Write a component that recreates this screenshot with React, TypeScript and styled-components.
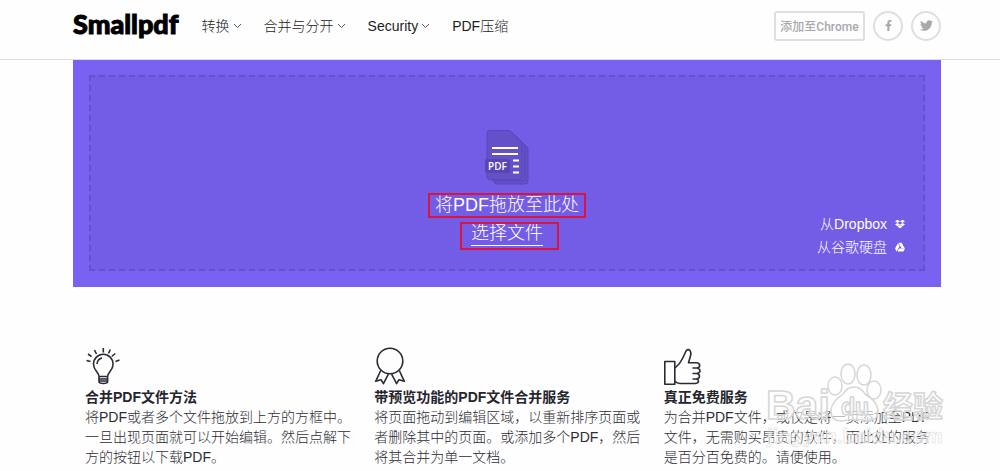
import React from "react";
import styled, { createGlobalStyle } from "styled-components";
import { FaFacebookF, FaTwitter, FaDropbox, FaGoogleDrive } from "react-icons/fa";

const GlobalStyle = createGlobalStyle`
  * { box-sizing: border-box; }
  body {
    margin: 0;
    background: #fefefe;
    color: #25252d;
    font-family: "Liberation Sans", "Noto Sans CJK SC", sans-serif;
    font-size: 14px;
    line-height: 20px;
  }
`;

const Header = styled.header`
  display: flex;
  align-items: center;
  height: 60px;
  padding: 0 59px 8px 73px;
  border-bottom: 1px solid #dddce4;
`;

const Logo = styled.a`
  margin-top: -4px;
  color: #000;
  font-family: "Lato Black", Lato, "Liberation Sans", sans-serif;
  font-size: 27px;
  font-weight: 900;
  line-height: 32px;
  text-decoration: none;
  -webkit-text-stroke: 1px #000;
`;

const Nav = styled.nav`
  display: flex;
  flex: 1;
  gap: 22px;
  margin-left: 23px;
`;

const NavLink = styled.a`
  display: flex;
  align-items: center;
  gap: 3px;
  color: #1c1c22;
  font-weight: 300;
  text-decoration: none;
  white-space: nowrap;
`;

const Actions = styled.div`
  display: flex;
  gap: 8px;
`;

const OutlineButton = styled.button<{ $round?: boolean }>`
  display: flex;
  align-items: center;
  justify-content: center;
  width: ${(p) => (p.$round ? "30px" : "91px")};
  height: 30px;
  padding: 0;
  border: 2px solid #e0dde3;
  border-radius: ${(p) => (p.$round ? "50%" : "3px")};
  background: transparent;
  color: #aaa8ac;
  font-family: Roboto, "Noto Sans CJK SC", sans-serif;
  font-size: 12px;
  font-weight: 500;
  white-space: nowrap;
`;

const Main = styled.main`
  padding: 0 59px 0 73px;
`;

const Hero = styled.section`
  padding: 15px 16px 16px 16px;
  background: #7961f1;
`;

const DropZone = styled.div`
  position: relative;
  display: flex;
  flex-direction: column;
  align-items: center;
  height: 196px;
  padding-top: 52px;
  border: 2px dashed #6651cc;
  background: #735ce6;
  color: #fff;
  font-size: 18px;
  font-weight: 300;
`;

const Marked = styled.div<{ $inset: string }>`
  position: relative;
  line-height: 24px;
  &::after {
    content: "";
    position: absolute;
    inset: ${(p) => p.$inset};
    border: 2px solid #d91440;
    pointer-events: none;
  }
`;

const DropText = styled(Marked)`
  margin-top: 8px;
`;

const ChooseWrap = styled(Marked)`
  margin-top: 4px;
`;

const ChooseButton = styled.button`
  display: block;
  padding: 0;
  border: 0;
  border-bottom: 1px solid #fff;
  background: none;
  color: inherit;
  font: inherit;
  line-height: 24px;
`;

const Sources = styled.div`
  position: absolute;
  right: 18px;
  bottom: 12px;
  display: flex;
  flex-direction: column;
  align-items: flex-end;
  gap: 3px;
`;

const SourceLink = styled.a`
  display: flex;
  align-items: center;
  gap: 8px;
  color: #fff;
  font-size: 14px;
  text-decoration: none;
`;

const Features = styled.section`
  position: relative;
  display: grid;
  grid-template-columns: repeat(3, 1fr);
  padding-top: 59px;
`;

const Feature = styled.article`
  padding-left: 12px;
`;

const FeatureIcon = styled.svg`
  display: block;
  width: 40px;
  height: 40px;
  fill: none;
  stroke: #2a2a34;
  stroke-width: 1.6;
  stroke-linejoin: round;
`;

const FeatureTitle = styled.h2`
  margin: 1px 0 0;
  font-size: 14px;
  font-weight: 700;
`;

const FeatureText = styled.p`
  margin: 0;
  color: #2c2c33;
  font-weight: 300;
`;

const Watermark = styled.svg`
  position: absolute;
  right: -9px;
  top: 68px;
  width: 185px;
  height: 100px;
  pointer-events: none;
`;

const Chevron = () => (
  <svg width="9" height="6" viewBox="0 0 9 6" fill="none" stroke="#55555c">
    <path d="M1 1l3.500 3.500L8 1" />
  </svg>
);

const PdfIcon = () => (
  <svg width="44" height="56" viewBox="0 0 44 56">
    <g fill="#6450c8" stroke="#5a47b6">
      <path d="M9 7h22l12 12v33q0 3-3 3H12q-3 0-3-3z" />
      <path d="M6 4h21l13 12v33q0 3-3 3H9q-3 0-3-3z" />
      <path d="M5 1.500h20L37 13.500v34q0 3-3 3H5q-3 0-3-3v-43q0-3 3-3z" />
    </g>
    <rect x="0" y="30" width="25" height="14" rx="2" fill="#5946b4" />
    <path d="M7 19h26M7 25h26M28 31.500h6M28 37.500h6M28 43.500h6" stroke="#fff" strokeWidth="2" />
    <text x="3" y="41" fill="#fff" fontFamily="Open Sans, sans-serif" fontSize="10" fontWeight="600">PDF</text>
  </svg>
);

const navItems = [
  { label: "转换", menu: true },
  { label: "合并与分开", menu: true },
  { label: "Security", menu: true },
  { label: "PDF压缩", menu: false },
];

const features = [
  {
    title: "合并PDF文件方法",
    text: "将PDF或者多个文件拖放到上方的方框中。一旦出现页面就可以开始编辑。然后点解下方的按钮以下载PDF。",
    icon: (
      <>
        <path d="M14 30.500c0-4-5.500-6-5.500-12.500a9.800 9.800 0 0 1 19.600 0c0 6.500-5.500 8.500-5.500 12.500z" />
        <path d="M12 18q.5-5 5-6M18.300 2v4.500M9.500 4l2 4M3 8l3.500 2.700M1.500 14.500l4 1M25.300 3.500l-1.800 4M30.300 7.500l-3.600 3M34.500 14l-4 1.500" />
        <path d="M14 31v4.500q0 2 4.300 2t4.300-2V31M14 33h8.600M14 35h8.600" />
      </>
    ),
  },
  {
    title: "带预览功能的PDF文件合并服务",
    text: "将页面拖动到编辑区域，以重新排序页面或者删除其中的页面。或添加多个PDF，然后将其合并为单一文档。",
    icon: (
      <>
        <circle cx="16" cy="15" r="12.800" />
        <path d="M6.700 24.500l-5 10.800L7 33.700l2.400 4 5-9.500M25.300 24.500l5 10.800-5.300-1.600-2.400 4-5-9.500" />
      </>
    ),
  },
  {
    title: "真正免费服务",
    text: "为合并PDF文件，或仅是将一页添加至PDF文件，无需购买昂贵的软件，而此处的服务是百分百免费的。请便使用。",
    icon: (
      <>
        <path d="M.8 15.500h10v22.700H.8z" />
        <path d="M11 22q5-4 7.500-9.500 2-4 3.500-7.500 2-2.500 4-.5 1.500 2 .5 5.500l-2 6.700H33q2.700.5 2.700 2.700T33 22h-4.500M33 22q3 .5 3 2.800t-3 2.700h-4.500M33 27.500q2.500.5 2.500 2.700T32.500 33h-4M32.500 33q2 .5 2 2.300t-3 2.200H16q-3 0-5-2.200" />
      </>
    ),
  },
];

export default function App() {
  return (
    <>
      <GlobalStyle />
      <Header>
        <Logo href="#">Smallpdf</Logo>
        <Nav>
          {navItems.map((item) => (
            <NavLink href="#" key={item.label}>
              {item.label}
              {item.menu && <Chevron />}
            </NavLink>
          ))}
        </Nav>
        <Actions>
          <OutlineButton>添加至Chrome</OutlineButton>
          <OutlineButton $round aria-label="Facebook"><FaFacebookF size={11} /></OutlineButton>
          <OutlineButton $round aria-label="Twitter"><FaTwitter size={13} /></OutlineButton>
        </Actions>
      </Header>
      <Main>
        <Hero>
          <DropZone>
            <PdfIcon />
            <DropText $inset="0 -7px -1px -7px">将PDF拖放至此处</DropText>
            <ChooseWrap $inset="1px -16px -4px -11px">
              <ChooseButton>选择文件</ChooseButton>
            </ChooseWrap>
            <Sources>
              <SourceLink href="#">从Dropbox <FaDropbox size={10} /></SourceLink>
              <SourceLink href="#">从谷歌硬盘 <FaGoogleDrive size={10} /></SourceLink>
            </Sources>
          </DropZone>
        </Hero>
        <Features>
          {features.map((f) => (
            <Feature key={f.title}>
              <FeatureIcon viewBox="0 0 40 40">{f.icon}</FeatureIcon>
              <FeatureTitle>{f.title}</FeatureTitle>
              <FeatureText>{f.text}</FeatureText>
            </Feature>
          ))}
          <Watermark viewBox="0 0 185 100" fill="#fff" fillOpacity="0.6" stroke="#d6d6d6" strokeWidth="1.500">
            <g fontFamily="Liberation Sans, Noto Sans CJK SC, sans-serif" fontWeight="700">
              <text x="1" y="64" fontSize="41">Bai</text>
              <text x="118" y="62" fontSize="30">经验</text>
              <text x="2" y="88" fontSize="20" strokeWidth="0.500">jingyan.baidu.com</text>
            </g>
            <ellipse cx="70" cy="31" rx="7" ry="9" />
            <ellipse cx="83" cy="19" rx="7" ry="10" />
            <ellipse cx="99" cy="20" rx="7" ry="10" />
            <ellipse cx="109" cy="35" rx="7" ry="9" />
            <path d="M89 32q7 0 11 7 13 8 13 17 0 10-12 10-12-3-24 0-11 0-11-10 0-9 12-17 4-7 11-7z" />
            <text x="76" y="60" fontSize="23" fontWeight="700" fontFamily="Liberation Sans, sans-serif">du</text>
          </Watermark>
        </Features>
      </Main>
    </>
  );
}
